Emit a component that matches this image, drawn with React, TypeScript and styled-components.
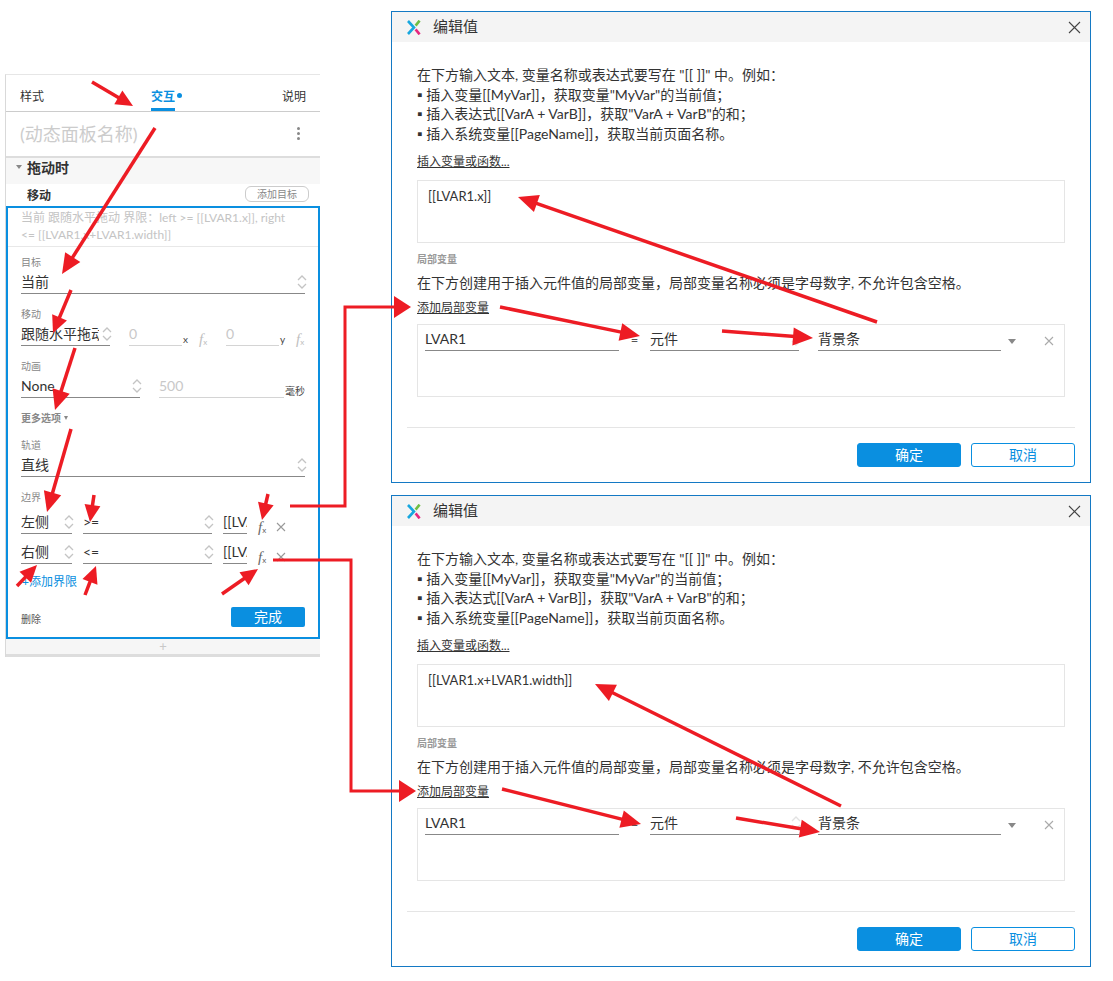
import React from 'react';
import styled, { createGlobalStyle } from 'styled-components';

const GlobalStyle = createGlobalStyle`
  html, body {
    margin: 0;
    padding: 0;
    background: #fff;
  }
  body {
    font-family: Lato, "Noto Sans CJK SC", sans-serif;
    color: #333;
  }
  * {
    box-sizing: border-box;
  }
`;

const Page = styled.div`
  position: relative;
  width: 1113px;
  height: 981px;
  display: flex;
  align-items: flex-start;
  overflow: hidden;
`;

const Overlay = styled.svg`
  position: absolute;
  top: 0;
  left: 0;
  pointer-events: none;
`;

/* left panel */
const Panel = styled.div`
  width: 315px;
  margin: 74px 0 0 5px;
  border-top: 1px solid #e6e6e6;
  border-left: 1px solid #d9d9d9;
  display: flex;
  flex-direction: column;
`;

const Tabs = styled.div`
  height: 37px;
  padding: 0 14px;
  display: flex;
  justify-content: space-between;
  border-bottom: 1px solid #ccc;
`;

const Tab = styled.div<{ $active?: boolean }>`
  position: relative;
  height: 36px;
  padding-top: 13px;
  font-size: 12px;
  line-height: 17px;
  color: ${(p) => (p.$active ? '#0a8fe0' : '#333')};
  font-weight: ${(p) => (p.$active ? 700 : 400)};
  border-bottom: 3px solid ${(p) => (p.$active ? '#0a8fe0' : 'transparent')};
`;

const TabDot = styled.span`
  position: absolute;
  top: 18px;
  right: -7px;
  width: 5px;
  height: 5px;
  border-radius: 50%;
  background: #0a8fe0;
`;

const NameRow = styled.div`
  height: 44px;
  padding: 0 20px 2px 14px;
  display: flex;
  align-items: center;
  justify-content: space-between;
`;

const NameText = styled.div`
  font-size: 18px;
  color: #ccc;
`;

const Kebab = styled.div`
  display: flex;
  flex-direction: column;
  gap: 2px;
  span {
    width: 3px;
    height: 3px;
    border-radius: 50%;
    background: #888;
  }
`;

const SectionHead = styled.div`
  height: 28px;
  background: #f7f7f7;
  border-top: 2px solid #ddd;
  padding: 0 0 8px 10px;
  display: flex;
  align-items: center;
  gap: 5px;
  font-size: 14px;
  font-weight: 700;
  color: #333;
`;

const Caret = styled.span`
  width: 0;
  height: 0;
  border-left: 3.5px solid transparent;
  border-right: 3.5px solid transparent;
  border-top: 4px solid #888;
`;

const ActionRow = styled.div`
  height: 22px;
  padding: 0 11px 2px 21px;
  display: flex;
  justify-content: space-between;
  align-items: center;
  font-size: 12px;
  font-weight: 700;
`;

const AddTarget = styled.div`
  width: 64px;
  height: 16px;
  border: 1px solid #ccc;
  border-radius: 6px;
  text-align: center;
  font-size: 10px;
  font-weight: 400;
  line-height: 14px;
  color: #888;
`;

const Card = styled.div`
  height: 433px;
  border: 2px solid #0a8fe0;
  display: flex;
  flex-direction: column;
`;

const Summary = styled.div`
  height: 39px;
  padding: 1px 13px 0;
  font-size: 12px;
  line-height: 17px;
  color: #c4c4c4;
  border-bottom: 1px solid #e8e8e8;
  white-space: nowrap;
`;

const Group = styled.div<{ $top: number }>`
  margin-top: ${(p) => p.$top}px;
  padding: 0 13px;
`;

const Label = styled.div<{ $bold?: boolean }>`
  font-size: 10px;
  line-height: 14px;
  height: 14px;
  color: #888;
  font-weight: ${(p) => (p.$bold ? 700 : 400)};
  display: flex;
  align-items: center;
  gap: 3px;
`;

const MoreCaret = styled.span`
  width: 0;
  height: 0;
  border-left: 2.5px solid transparent;
  border-right: 2.5px solid transparent;
  border-top: 4px solid #888;
`;

const ControlRow = styled.div<{ $top?: number }>`
  display: flex;
  align-items: flex-end;
  margin-top: ${(p) => p.$top ?? 0}px;
`;

const Select = styled.div<{ $width?: number; $left?: number }>`
  width: ${(p) => (p.$width ? `${p.$width}px` : '100%')};
  margin-left: ${(p) => p.$left ?? 0}px;
  height: 22px;
  padding-bottom: 1px;
  flex: none;
  border-bottom: 1px solid #888;
  display: flex;
  align-items: center;
  justify-content: space-between;
`;

const Value = styled.span<{ $muted?: boolean }>`
  font-size: 14px;
  line-height: 20px;
  color: ${(p) => (p.$muted ? '#c8c8c8' : '#333')};
  white-space: nowrap;
  overflow: hidden;
  flex: 1;
  min-width: 0;
`;

const Faint = styled(Select)`
  border-bottom-color: #d4d4d4;
`;

const Unit = styled.span<{ $width: number }>`
  width: ${(p) => p.$width}px;
  flex: none;
  font-size: 10px;
  line-height: 14px;
  color: #444;
  padding-left: 1px;
  white-space: nowrap;
`;

const FxMark = styled.span<{ $muted?: boolean; $left?: number }>`
  flex: none;
  width: 11px;
  height: 16px;
  margin-left: ${(p) => p.$left ?? 0}px;
  font-family: "Liberation Serif", serif;
  font-style: italic;
  font-size: 15px;
  line-height: 16px;
  color: ${(p) => (p.$muted ? '#c0c0c0' : '#666')};
  white-space: nowrap;
  transform: translateY(1px);
  sub {
    font-family: Lato, sans-serif;
    font-style: normal;
    font-size: 8px;
    vertical-align: -1px;
    line-height: 0;
  }
`;

const ClearMark = styled.svg`
  flex: none;
  margin-left: 7px;
  transform: translateY(-2px);
`;

const AddBound = styled.div`
  margin-top: 10px;
  padding-left: 14px;
  height: 16px;
  font-size: 12px;
  line-height: 16px;
  color: #0a8fe0;
`;

const CardFoot = styled.div`
  margin-top: 17px;
  padding: 0 13px;
  height: 20px;
  display: flex;
  justify-content: space-between;
  align-items: center;
  font-size: 10px;
  color: #555;
`;

const DeleteText = styled.span`
  margin-top: 3px;
`;

const DoneButton = styled.div`
  width: 74px;
  height: 20px;
  border-radius: 2px;
  background: #0a8fe0;
  color: #fff;
  font-size: 14px;
  line-height: 20px;
  text-align: center;
`;

const PanelFoot = styled.div`
  height: 18px;
  background: #f6f6f6;
  border-bottom: 3px solid #ddd;
  text-align: center;
  font-size: 13px;
  line-height: 15px;
  color: #c8c8c8;
`;

/* dialogs */
const DialogColumn = styled.div`
  margin: 11px 0 0 71px;
  display: flex;
  flex-direction: column;
  gap: 12px;
`;

const Dialog = styled.div`
  width: 700px;
  height: 472px;
  border: 1px solid #1479c4;
  background: #fff;
  display: flex;
  flex-direction: column;
`;

const TitleBar = styled.div`
  height: 30px;
  flex: none;
  background: #f4f4f4;
  display: flex;
  align-items: center;
  padding: 0 9px 0 15px;
  gap: 12px;
`;

const Title = styled.div`
  flex: 1;
  font-size: 15px;
  line-height: 22px;
  margin-bottom: 3px;
  color: #333;
`;

const DialogBody = styled.div`
  padding: 23px 25px 0;
`;

const Intro = styled.div`
  font-size: 14px;
  line-height: 19.5px;
  color: #333;
  white-space: nowrap;
`;

const TextLink = styled.div<{ $top: number }>`
  margin-top: ${(p) => p.$top}px;
  font-size: 12px;
  line-height: 17px;
  text-decoration: underline;
  color: #333;
`;

const ExprBox = styled.div`
  margin-top: 10px;
  height: 63px;
  border: 1px solid #e5e5e5;
  padding: 6px 10px;
  font-size: 13px;
  line-height: 18px;
  color: #333;
`;

const Caption = styled.div`
  margin-top: 9px;
  font-size: 10px;
  line-height: 14px;
  font-weight: 700;
  color: #999;
`;

const HelpLine = styled.div`
  margin-top: 7px;
  font-size: 14px;
  line-height: 20px;
  color: #333;
  white-space: nowrap;
`;

const VarBox = styled.div`
  margin-top: 8px;
  height: 73px;
  border: 1px solid #e5e5e5;
  padding: 2px 0 0 7px;
`;

const VarRow = styled.div`
  display: flex;
  align-items: flex-end;
`;

const VarField = styled.div<{ $width: number }>`
  width: ${(p) => p.$width}px;
  height: 24px;
  flex: none;
  border-bottom: 1px solid #888;
  font-size: 14px;
  line-height: 23px;
  color: #333;
  display: flex;
  justify-content: space-between;
  align-items: center;
`;

const Equals = styled.span<{ $width: number }>`
  width: ${(p) => p.$width}px;
  flex: none;
  margin-bottom: 2px;
  text-align: center;
  font-size: 13px;
  line-height: 18px;
  color: #555;
`;

const Gap = styled.span<{ $width: number }>`
  width: ${(p) => p.$width}px;
  flex: none;
`;

const DownCaret = styled.span`
  flex: none;
  margin: 0 0 7px 7px;
  width: 0;
  height: 0;
  border-left: 4.5px solid transparent;
  border-right: 4.5px solid transparent;
  border-top: 5px solid #888;
`;

const VarClear = styled.svg`
  flex: none;
  margin: 0 0 5px 28px;
`;

const DialogFoot = styled.div`
  margin: 30px 15px 0;
  border-top: 1px solid #e5e5e5;
  padding-top: 15px;
  display: flex;
  justify-content: flex-end;
  gap: 10px;
`;

const DialogButton = styled.div<{ $primary?: boolean }>`
  width: 104px;
  height: 24px;
  border-radius: 3px;
  border: 1px solid #0a8fe0;
  background: ${(p) => (p.$primary ? '#0a8fe0' : '#fff')};
  color: ${(p) => (p.$primary ? '#fff' : '#0a8fe0')};
  font-size: 14px;
  line-height: 22px;
  text-align: center;
`;

const ChevronIcon = styled.svg`
  flex: none;
  margin: 0 -2px 0 3px;
`;

const Chevrons = ({ faint }: { faint?: boolean }) => (
  <ChevronIcon width="10" height="16" viewBox="0 0 10 16" fill="none" stroke={faint ? '#e2e2e2' : '#c4c4c4'} strokeWidth="1.3">
    <path d="M1 6 L5 2 L9 6" />
    <path d="M1 10 L5 14 L9 10" />
  </ChevronIcon>
);

const Cross = ({ size, color }: { size: number; color: string }) => (
  <path d={`M1 1 L${size - 1} ${size - 1} M${size - 1} 1 L1 ${size - 1}`} stroke={color} strokeWidth="1.1" fill="none" />
);

const Logo = () => (
  <svg width="14" height="15" viewBox="0 0 14 15" fill="none" strokeWidth="2.6">
    <path d="M1 1 L7 7.5 L1 14" stroke="#17a7df" />
    <path d="M8.6 5.6 L12.6 0.6" stroke="#6fbe44" />
    <path d="M8.6 9.4 L12.6 14.4" stroke="#e6287f" />
  </svg>
);

const Fx = ({ muted, left }: { muted?: boolean; left?: number }) => (
  <FxMark $muted={muted} $left={left}>f<sub>x</sub></FxMark>
);

interface DialogProps {
  expression: string;
}

const EditDialog = ({ expression }: DialogProps) => (
  <Dialog>
    <TitleBar>
      <Logo />
      <Title>编辑值</Title>
      <svg width="13" height="13" viewBox="0 0 13 13">
        <Cross size={13} color="#444" />
      </svg>
    </TitleBar>
    <DialogBody>
      <Intro>
        在下方输入文本, 变量名称或表达式要写在 "[[ ]]" 中。例如：<br />
        ▪ 插入变量[[MyVar]]，获取变量"MyVar"的当前值；<br />
        ▪ 插入表达式[[VarA + VarB]]，获取"VarA + VarB"的和；<br />
        ▪ 插入系统变量[[PageName]]，获取当前页面名称。
      </Intro>
      <TextLink $top={10}>插入变量或函数...</TextLink>
      <ExprBox>{expression}</ExprBox>
      <Caption>局部变量</Caption>
      <HelpLine>在下方创建用于插入元件值的局部变量，局部变量名称必须是字母数字, 不允许包含空格。</HelpLine>
      <TextLink $top={6}>添加局部变量</TextLink>
      <VarBox>
        <VarRow>
          <VarField $width={194}>LVAR1</VarField>
          <Equals $width={31}>=</Equals>
          <VarField $width={149}>
            元件
            <Chevrons faint />
          </VarField>
          <Gap $width={19} />
          <VarField $width={183}>背景条</VarField>
          <DownCaret />
          <VarClear width="10" height="10" viewBox="0 0 10 10">
            <Cross size={10} color="#aaa" />
          </VarClear>
        </VarRow>
      </VarBox>
    </DialogBody>
    <DialogFoot>
      <DialogButton $primary>确定</DialogButton>
      <DialogButton>取消</DialogButton>
    </DialogFoot>
  </Dialog>
);

const RED = '#ed1c24';

// tail and tip of every straight arrow in the markup
const arrows: [number, number, number, number][] = [
  [92, 82, 133, 106],
  [155, 128, 62, 274],
  [71, 290, 53, 333],
  [75, 348, 55, 410],
  [71, 429, 47, 512],
  [94, 495, 90, 522],
  [268, 494, 262, 520],
  [17, 586, 37, 565],
  [85, 595, 96, 566],
  [222, 594, 258, 569],
  [877, 322, 518, 197],
  [500, 307, 640, 336],
  [722, 331, 813, 338],
  [841, 806, 595, 684],
  [502, 789, 641, 824],
  [736, 818, 820, 832],
];

const head = (x1: number, y1: number, x2: number, y2: number, len: number, half: number) => {
  const d = Math.hypot(x2 - x1, y2 - y1);
  const ux = (x2 - x1) / d;
  const uy = (y2 - y1) / d;
  const bx = x2 - ux * len;
  const by = y2 - uy * len;
  return `${x2},${y2} ${bx - uy * half},${by + ux * half} ${bx + uy * half},${by - ux * half}`;
};

const Arrow = ({ x1, y1, x2, y2 }: { x1: number; y1: number; x2: number; y2: number }) => {
  const d = Math.hypot(x2 - x1, y2 - y1);
  const small = d < 60;
  const len = small ? 17 : 20;
  // stop the shaft inside the head so the tip stays sharp
  const t = (d - len + 2) / d;
  return (
    <g>
      <line x1={x1} y1={y1} x2={x1 + (x2 - x1) * t} y2={y1 + (y2 - y1) * t} stroke={RED} strokeWidth="3.5" />
      <polygon points={head(x1, y1, x2, y2, len, small ? 8 : 9)} fill={RED} />
    </g>
  );
};

const Markup = () => (
  <Overlay width="1113" height="981">
    {arrows.map(([x1, y1, x2, y2], i) => (
      <Arrow key={i} x1={x1} y1={y1} x2={x2} y2={y2} />
    ))}
    <polyline points="290,506 345,506 345,307 395,307" fill="none" stroke={RED} strokeWidth="3" />
    <polygon points={head(395, 307, 411, 307, 17, 11)} fill={RED} />
    <polyline points="273,560 351,560 351,791 400,791" fill="none" stroke={RED} strokeWidth="3" />
    <polygon points={head(400, 791, 416, 791, 17, 11)} fill={RED} />
  </Overlay>
);

const App = () => (
  <Page>
    <GlobalStyle />
    <Panel>
      <Tabs>
        <Tab>样式</Tab>
        <Tab $active>
          交互
          <TabDot />
        </Tab>
        <Tab>说明</Tab>
      </Tabs>
      <NameRow>
        <NameText>(动态面板名称)</NameText>
        <Kebab>
          <span />
          <span />
          <span />
        </Kebab>
      </NameRow>
      <SectionHead>
        <Caret />
        拖动时
      </SectionHead>
      <ActionRow>
        移动
        <AddTarget>添加目标</AddTarget>
      </ActionRow>
      <Card>
        <Summary>
          当前 跟随水平拖动 界限：left &gt;= [[LVAR1.x]], right<br />
          &lt;= [[LVAR1.x+LVAR1.width]]
        </Summary>
        <Group $top={8}>
          <Label>目标</Label>
          <ControlRow $top={3}>
            <Select>
              <Value>当前</Value>
              <Chevrons />
            </Select>
          </ControlRow>
        </Group>
        <Group $top={13}>
          <Label>移动</Label>
          <ControlRow $top={3}>
            <Select $width={89}>
              <Value>跟随水平拖动</Value>
              <Chevrons />
            </Select>
            <Faint $width={53} $left={19}>
              <Value $muted>0</Value>
            </Faint>
            <Unit $width={17}>x</Unit>
            <Fx muted />
            <Faint $width={53} $left={16}>
              <Value $muted>0</Value>
            </Faint>
            <Unit $width={17}>y</Unit>
            <Fx muted />
          </ControlRow>
        </Group>
        <Group $top={13}>
          <Label>动画</Label>
          <ControlRow $top={3}>
            <Select $width={119}>
              <Value>None</Value>
              <Chevrons />
            </Select>
            <Faint $width={125} $left={19}>
              <Value $muted>500</Value>
            </Faint>
            <Unit $width={21}>毫秒</Unit>
          </ControlRow>
        </Group>
        <Group $top={13}>
          <Label $bold>
            更多选项
            <MoreCaret />
          </Label>
        </Group>
        <Group $top={13}>
          <Label>轨道</Label>
          <ControlRow $top={3}>
            <Select>
              <Value>直线</Value>
              <Chevrons />
            </Select>
          </ControlRow>
        </Group>
        <Group $top={13}>
          <Label>边界</Label>
          <ControlRow $top={8}>
            <Select $width={51}>
              <Value>左侧</Value>
              <Chevrons />
            </Select>
            <Select $width={129} $left={11}>
              <Value>&gt;=</Value>
              <Chevrons />
            </Select>
            <Select $width={24} $left={11}>
              <Value>[[LVAR1.x]]</Value>
            </Select>
            <Fx left={11} />
            <ClearMark width="10" height="10" viewBox="0 0 10 10">
              <Cross size={10} color="#999" />
            </ClearMark>
          </ControlRow>
          <ControlRow $top={8}>
            <Select $width={51}>
              <Value>右侧</Value>
              <Chevrons />
            </Select>
            <Select $width={129} $left={11}>
              <Value>&lt;=</Value>
              <Chevrons />
            </Select>
            <Select $width={24} $left={11}>
              <Value>[[LVAR1.x+LVAR1.width]]</Value>
            </Select>
            <Fx left={11} />
            <ClearMark width="10" height="10" viewBox="0 0 10 10">
              <Cross size={10} color="#999" />
            </ClearMark>
          </ControlRow>
        </Group>
        <AddBound>+添加界限</AddBound>
        <CardFoot>
          <DeleteText>删除</DeleteText>
          <DoneButton>完成</DoneButton>
        </CardFoot>
      </Card>
      <PanelFoot>+</PanelFoot>
    </Panel>
    <DialogColumn>
      <EditDialog expression="[[LVAR1.x]]" />
      <EditDialog expression="[[LVAR1.x+LVAR1.width]]" />
    </DialogColumn>
    <Markup />
  </Page>
);

export default App;
